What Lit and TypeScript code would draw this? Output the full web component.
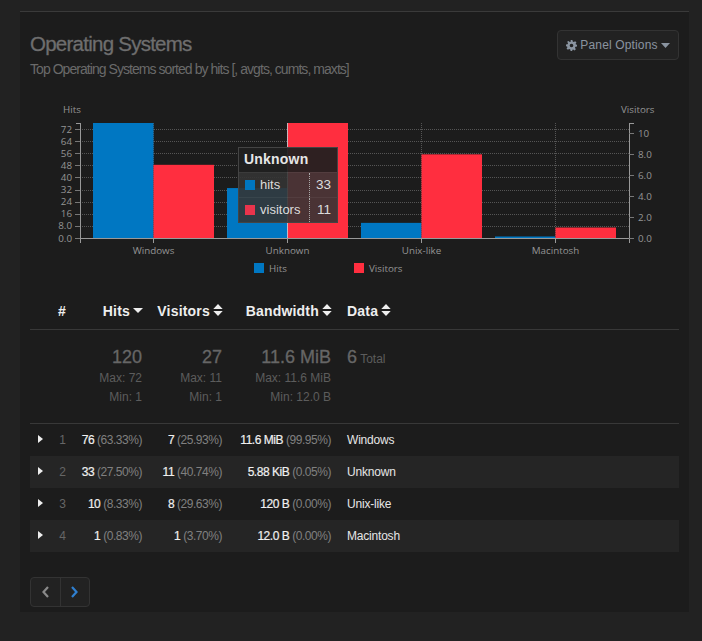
import { LitElement, html, css, svg } from "lit";
import { customElement } from "lit/decorators.js";

const BLUE = "#0077c2";
const RED = "#ff2e3f";
const hitsTicks = [0, 8, 16, 24, 32, 40, 48, 56, 64, 72];
const visTicks = [0, 2, 4, 6, 8, 10];
const cats = [
  { name: "Windows", x: 153.5, hits: 76, vis: 7 },
  { name: "Unknown", x: 287.5, hits: 33, vis: 11 },
  { name: "Unix-like", x: 421.5, hits: 10, vis: 8 },
  { name: "Macintosh", x: 555.5, hits: 1, vis: 1 },
];
const rows = [
  ["1", "76", "(63.33%)", "7", "(25.93%)", "11.6 MiB", "(99.95%)", "Windows"],
  ["2", "33", "(27.50%)", "11", "(40.74%)", "5.88 KiB", "(0.05%)", "Unknown"],
  ["3", "10", "(8.33%)", "8", "(29.63%)", "120 B", "(0.00%)", "Unix-like"],
  ["4", "1", "(0.83%)", "1", "(3.70%)", "12.0 B", "(0.00%)", "Macintosh"],
];
const BASE = 238;
const hy = (v: number) => BASE - (v * 115) / 76;
const vy = (v: number) => BASE - (v * 115) / 11;

const sortIcon = html`<svg class="sort" width="10" height="12" viewBox="0 0 10 12"><path d="M5 0 9.700 5H.3zM.3 7h9.400L5 12z" fill="#eee"/></svg>`;
const downIcon = html`<svg class="sort down" width="10" height="5" viewBox="0 0 10 5"><path d="M0 0h10L5 5z" fill="#eee"/></svg>`;

@customElement("app-root")
export class AppRoot extends LitElement {
  static styles = css`
    :host { display: block; height: 641px; background: #222; font-family: "Liberation Sans", Arial, sans-serif; overflow: hidden; }
    .panel { margin: 0 13px 0 20px; position: relative; top: 11px; height: 601px; box-sizing: border-box; background: #1c1c1c; border-top: 1px solid #3a3a3a; padding: 0 10px; }
    .head { display: flex; justify-content: space-between; align-items: flex-start; padding-top: 18px; height: 70px; box-sizing: border-box; }
    h2 { margin: 0; font-size: 20.500px; line-height: 28px; font-weight: 400; color: #6e6e6e; letter-spacing: -.75px; -webkit-text-stroke: .3px #6e6e6e; }
    .sub { font-size: 14px; line-height: 20px; margin-top: 1px; color: #6a6a6a; letter-spacing: -.95px; }
    .btn { display: flex; align-items: center; justify-content: center; gap: 3px; width: 122px; height: 30px; box-sizing: border-box; border: 1px solid #333; border-radius: 4px; background: #222; color: #8a94a0; font-size: 12px; letter-spacing: .15px; }
    .chart { position: relative; height: 180px; margin-top: 18px; }
    .chart svg { display: block; }
    .chart text { font-family: "Open Sans", sans-serif; font-size: 9.800px; fill: #949494; }
    .tip { position: absolute; left: 208px; top: 47px; width: 100px; height: 76px; box-sizing: border-box; background: rgba(52,52,52,.89); border: 1px solid #444; color: #ddd; font-size: 13px; }
    .tip-h { height: 24px; line-height: 23px; padding-left: 5px; font-weight: 700; background: rgba(0,0,0,.37); color: #e6e6e6; font-size: 14px; letter-spacing: .2px; }
    .tip-r { display: flex; height: 25px; align-items: center; border-top: 1px solid rgba(255,255,255,.05); box-sizing: border-box; }
    .tip-k { display: flex; align-items: center; gap: 5px; width: 70px; padding-left: 6px; box-sizing: border-box; margin-top: -1px; }
    .tip-s { width: 10px; height: 10px; }
    .tip-v { flex: 1; text-align: right; padding-right: 6px; border-left: 1px dotted #aaa; line-height: 24px; font-size: 13.500px; }
    .grid { display: grid; grid-template-columns: 20px 24px 68px 80px 109px 1fr; align-items: center; }
    .thead { height: 37px; border-bottom: 1px solid #383838; margin-top: 13px; color: #eee; font-weight: 700; font-size: 14px; letter-spacing: .2px; box-sizing: border-box; }
    .r { text-align: right; }
    .c { text-align: center; }
    .d { padding-left: 16px; }
    .sort { margin-left: 3px; margin-right: -1px; vertical-align: 0; }
    .down { vertical-align: 3px; }
    .sum { height: 94px; border-bottom: 1px solid #383838; align-items: start; box-sizing: border-box; padding-top: 16px; color: #5c5c5c; font-size: 12px; line-height: 19px; }
    .big { font-size: 18px; line-height: 22px; font-weight: 400; color: #666; margin-bottom: 1px; -webkit-text-stroke: .3px #666; }
    .row { height: 32px; font-size: 12px; color: #808080; letter-spacing: -.46px; }
    .row:nth-child(even) { background: #252525; }
    .rows { display: block; }
    .row b { font-weight: 400; color: #f0f0f0; -webkit-text-stroke: .2px #f0f0f0; }
    .name { color: #e6e6e6; letter-spacing: -.2px; }
    .arrow { width: 5px; height: 8px; display: block; margin: -3px 0 0 8px; }
    .rank { color: #666; font-size: 12px; padding-left: 1px; letter-spacing: 0; }
    .pager { display: flex; width: 60px; height: 30px; box-sizing: border-box; margin-top: 25px; border: 1px solid #333; border-radius: 4px; background: #222; }
    .pager div { flex: 1; display: flex; align-items: center; justify-content: center; }
    .pager div + div { border-left: 1px solid #333; }
  `;

  private chart() {
    const grid = hitsTicks.map((t) => svg`<line x1="80" x2="629" y1=${Math.round(hy(t)) + 0.5} y2=${Math.round(hy(t)) + 0.5} stroke="#555" stroke-dasharray="1 1"/>`);
    const vgrid = cats.map((c) => svg`<line x1=${c.x} x2=${c.x} y1="123" y2="238" stroke="#555" stroke-dasharray="1 1"/>`);
    const bars = cats.map((c) => svg`<rect x=${c.x - 60.5} y=${hy(c.hits)} width="60.5" height=${BASE - hy(c.hits)} fill=${BLUE}/>
        <rect x=${c.x} y=${vy(c.vis)} width="60.5" height=${BASE - vy(c.vis)} fill=${RED}/>`);
    const lt = hitsTicks.map((t) => svg`<text x="72" y=${hy(t) + 3.5} text-anchor="end">${t < 16 ? t.toFixed(1) : t}</text><line x1="75" x2="80" y1=${Math.round(hy(t)) + 0.5} y2=${Math.round(hy(t)) + 0.5} stroke="#777"/>`);
    const rt = visTicks.map((t) => svg`<text x="638" y=${vy(t) + 3.5}>${t < 10 ? t.toFixed(1) : t}</text><line x1="629" x2="634" y1=${Math.round(vy(t)) + 0.5} y2=${Math.round(vy(t)) + 0.5} stroke="#777"/>`);
    const xl = cats.map((c) => svg`<text x=${c.x} y="254" text-anchor="middle">${c.name}</text><line x1=${c.x} x2=${c.x} y1="238" y2="243" stroke="#999"/>`);
    return svg`<svg width="649" height="180" viewBox="30 100 649 180">
      ${grid}${vgrid}${bars}
      <line x1="287.5" x2="287.5" y1="123" y2="238" stroke="#cfd8dc" stroke-opacity=".8"/>
      <path d="M80.500 123.500H76M80.500 123V243M80 238.500H629.500M629.500 123V243M629 123.500H634" fill="none" stroke="#999"/>
      ${lt}${rt}${xl}
      <text x="63" y="113">Hits</text>
      <text x="621" y="113">Visitors</text>
      <rect x="254" y="263" width="10" height="10" fill=${BLUE}/>
      <text x="269" y="272">Hits</text>
      <rect x="354" y="263" width="10" height="10" fill=${RED}/>
      <text x="369" y="272">Visitors</text>
    </svg>`;
  }

  render() {
    return html`<div class="panel">
      <div class="head">
        <div><h2>Operating Systems</h2><div class="sub">Top Operating Systems sorted by hits [, avgts, cumts, maxts]</div></div>
        <div class="btn">
          <svg width="11" height="11" viewBox="0 0 24 24"><path fill="#8a94a0" fill-rule="evenodd" d="M10 0h4l.7 3.400 2.300 1 3-1.900 2.800 2.800-1.900 3 1 2.300L24 10v4l-3.400.7-1 2.300 1.900 3-2.800 2.800-3-1.900-2.300 1L14 24h-4l-.7-3.400-2.300-1-3 1.900-2.800-2.800 1.900-3-1-2.300L0 14v-4l3.400-.7 1-2.300-1.900-3L5.300 2.200l3 1.900 2.300-1zM12 8a4 4 0 1 0 0 8 4 4 0 0 0 0-8z"/></svg>
          <span>Panel Options</span>
          <svg width="9" height="5" viewBox="0 0 9 5"><path d="M0 0h9L4.500 5z" fill="#8a94a0"/></svg>
        </div>
      </div>
      <div class="chart">
        ${this.chart()}
        <div class="tip">
          <div class="tip-h">Unknown</div>
          <div class="tip-r"><div class="tip-k"><span class="tip-s" style="background:#0077c2"></span>hits</div><div class="tip-v">33</div></div>
          <div class="tip-r"><div class="tip-k"><span class="tip-s" style="background:#e8344c"></span>visitors</div><div class="tip-v">11</div></div>
        </div>
      </div>
      <div class="grid thead">
        <span></span><span class="c">#</span>
        <span class="r">Hits${downIcon}</span>
        <span class="r">Visitors${sortIcon}</span>
        <span class="r">Bandwidth${sortIcon}</span>
        <span class="d">Data${sortIcon}</span>
      </div>
      <div class="grid sum">
        <span></span><span></span>
        <div class="r"><div class="big">120</div>Max: 72<br />Min: 1</div>
        <div class="r"><div class="big">27</div>Max: 11<br />Min: 1</div>
        <div class="r"><div class="big">11.6 MiB</div>Max: 11.6 MiB<br />Min: 12.0 B</div>
        <div class="d"><span class="big">6</span> Total</div>
      </div>
      <div class="rows">
        ${rows.map(
          (r) => html`<div class="grid row">
            <svg class="arrow" viewBox="0 0 5 8"><path d="M0 0l5 4-5 4z" fill="#eee"/></svg>
            <span class="c rank">${r[0]}</span>
            <span class="r"><b>${r[1]}</b> ${r[2]}</span>
            <span class="r"><b>${r[3]}</b> ${r[4]}</span>
            <span class="r"><b>${r[5]}</b> ${r[6]}</span>
            <span class="d name">${r[7]}</span>
          </div>`
        )}
      </div>
      <div class="pager">
        <div><svg width="9" height="12" viewBox="0 0 9 12"><path d="M7 1 2.500 6 7 11" fill="none" stroke="#8a8a8a" stroke-width="2.200"/></svg></div>
        <div><svg width="9" height="12" viewBox="0 0 9 12"><path d="M2 1l4.500 5L2 11" fill="none" stroke="#2f7fd0" stroke-width="2.200"/></svg></div>
      </div>
    </div>`;
  }
}
